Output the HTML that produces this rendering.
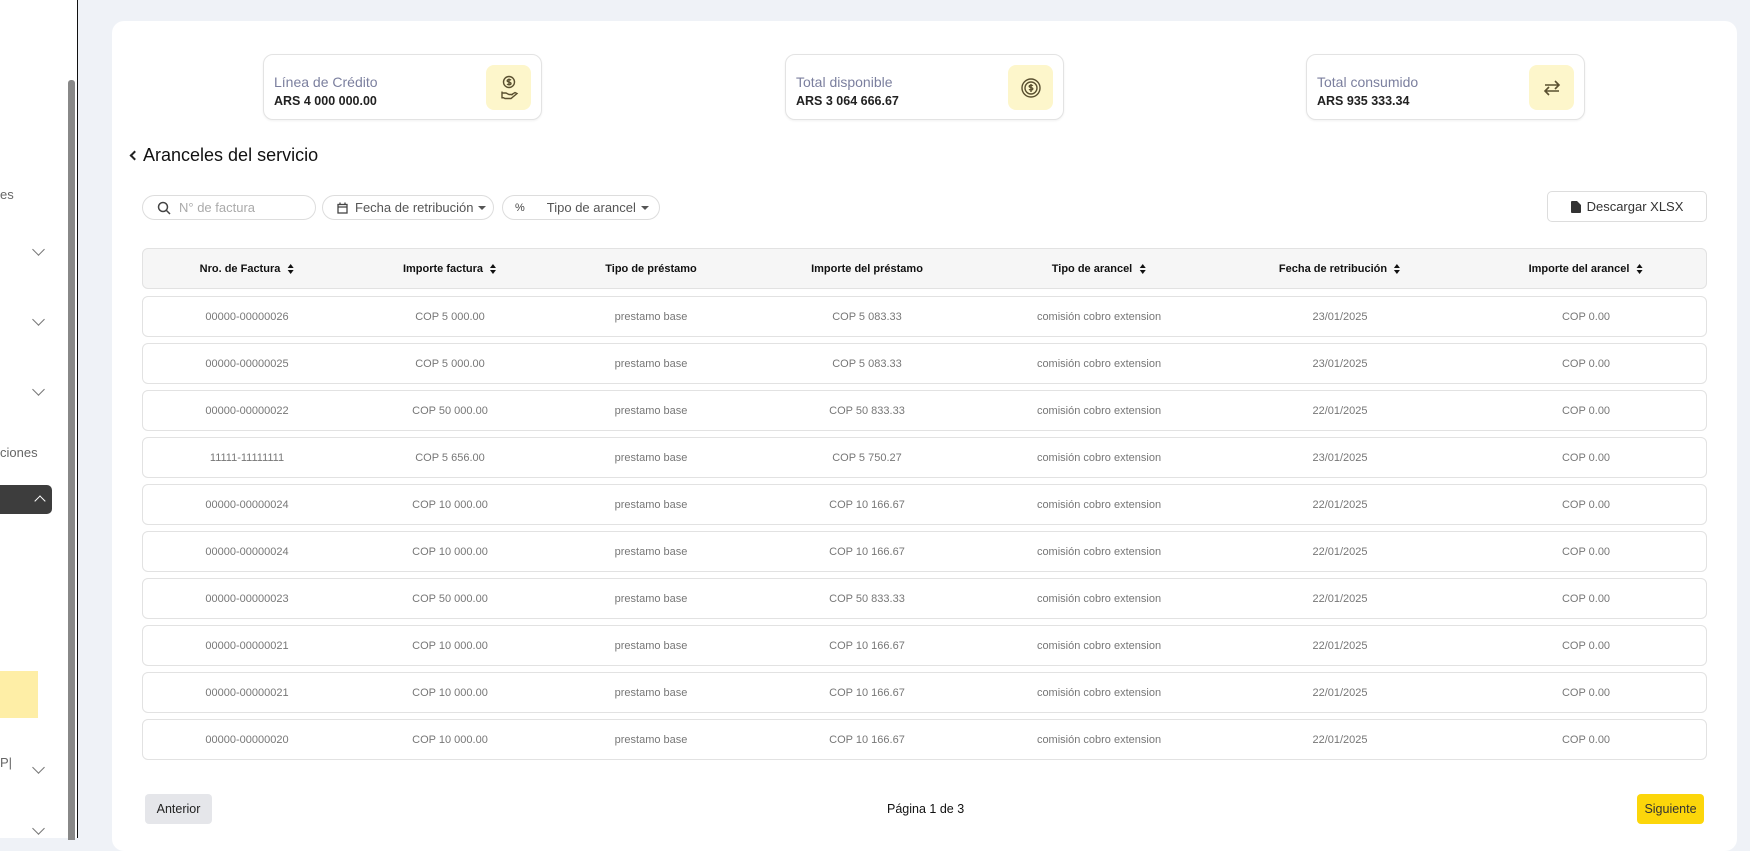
<!DOCTYPE html>
<html><head><meta charset="utf-8"><style>
*{box-sizing:border-box;margin:0;padding:0}
body{width:1750px;height:838px;overflow:hidden;background:#eff2f7;font-family:"Liberation Sans",sans-serif;position:relative}
.abs{position:absolute}
#side{left:0;top:0;width:78px;height:838px;background:#fff;border-right:1px solid #111}
.chev{position:absolute;left:34px;width:9px;height:9px;border-right:1.5px solid #777;border-bottom:1.5px solid #777;transform:rotate(45deg)}
#card{left:112px;top:21px;width:1625px;height:830px;background:#fff;border-radius:12px}
.stat{position:absolute;top:54px;width:279px;height:66px;border:1px solid #e3e3e3;border-radius:10px;background:#fff;box-shadow:0 1px 2px rgba(0,0,0,.06)}
.stat .t{position:absolute;left:10px;top:19px;font-size:14px;color:#7b7f9e}
.stat .v{position:absolute;left:10px;top:39px;font-size:12.5px;font-weight:bold;color:#222}
.stat .ic{position:absolute;right:10px;top:10px;width:45px;height:45px;background:#fdf6cb;border-radius:8px;display:flex;align-items:center;justify-content:center}
.pill{position:absolute;top:195px;height:25px;border:1px solid #ddd;border-radius:13px;font-size:13px;color:#555;display:flex;align-items:center}
.caret{width:0;height:0;border-left:4px solid transparent;border-right:4px solid transparent;border-top:4px solid #555;position:absolute}
.hdr{position:absolute;left:142px;top:248px;width:1565px;height:41px;background:#f6f6f6;border:1px solid #e2e2e2;border-radius:6px}
.row{position:absolute;left:142px;width:1565px;height:41px;border:1px solid #e2e2e2;border-radius:6px;background:#fff}
.c{position:absolute;top:0;height:100%;display:flex;align-items:center;justify-content:center;transform:translateX(-50%);white-space:nowrap;font-size:11px;color:#777}
.hdr .c{font-weight:bold;color:#111;font-size:11px}
.sort{display:inline-block;margin-left:7px;width:7px;height:10px;position:relative}
.sort:before{content:"";position:absolute;top:0;left:0;border-left:3.5px solid transparent;border-right:3.5px solid transparent;border-bottom:4px solid #111}
.sort:after{content:"";position:absolute;bottom:0;left:0;border-left:3.5px solid transparent;border-right:3.5px solid transparent;border-top:4px solid #111}
</style></head><body>
<div id="side" class="abs">
 <div class="abs" style="left:0;top:187px;font-size:13px;color:#666">es</div>
 <div class="chev" style="top:245px"></div>
 <div class="chev" style="top:315px"></div>
 <div class="chev" style="top:385px"></div>
 <div class="abs" style="left:0;top:445px;font-size:13px;color:#666">ciones</div>
 <div class="abs" style="left:0;top:485px;width:52px;height:29px;background:#3d3d3d;border-radius:0 5px 5px 0"></div>
 <div class="abs" style="left:36px;top:497px;width:8px;height:8px;border-left:1.6px solid #fff;border-top:1.6px solid #fff;transform:rotate(45deg)"></div>
 <div class="abs" style="left:0;top:671px;width:38px;height:47px;background:#feeea6"></div>
 <div class="abs" style="left:0;top:755px;font-size:13px;color:#666">P|</div>
 <div class="chev" style="top:763px"></div>
 <div class="chev" style="top:824px"></div>
 <div class="abs" style="left:68px;top:80px;width:7px;height:760px;background:#888;border-radius:3px 3px 0 0"></div>
</div>
<div id="card" class="abs"></div>

<div class="stat" style="left:263px"><div class="t">Línea de Crédito</div><div class="v">ARS 4 000 000.00</div>
<div class="ic"><svg width="22" height="26" viewBox="0 0 22 26" fill="none" stroke="#5a5030" stroke-width="1.4"><circle cx="11" cy="7" r="5.5"/><path d="M11 3.5v7M13 5.2c-.5-.8-3.8-1-3.8.7 0 1.6 3.8.8 3.8 2.6 0 1.6-3.3 1.4-3.9.5"/><path d="M4 18h4l3 1.5h4M4 22l3 1.5h6l6-5-2-1-4 2.5M4 16.5v7"/></svg></div></div>
<div class="stat" style="left:785px"><div class="t">Total disponible</div><div class="v">ARS 3 064 666.67</div>
<div class="ic"><svg width="24" height="24" viewBox="0 0 24 24" fill="none" stroke="#5a5030" stroke-width="1.4"><circle cx="12" cy="12" r="9"/><circle cx="12" cy="12" r="6"/><path d="M12 8v8M13.8 9.8c-.4-.7-3.6-.9-3.6.6s3.6.8 3.6 2.4-3.2 1.3-3.7.5"/></svg></div></div>
<div class="stat" style="left:1306px"><div class="t">Total consumido</div><div class="v">ARS 935 333.34</div>
<div class="ic"><svg width="24" height="24" viewBox="0 0 24 24" fill="none" stroke="#5a5030" stroke-width="1.6"><path d="M5 9h14M15 5l4 4-4 4M19 15H5M9 11l-4 4 4 4"/></svg></div></div>

<div class="abs" style="left:131px;top:152px;width:7px;height:7px;border-left:2px solid #222;border-bottom:2px solid #222;transform:rotate(45deg)"></div>
<div class="abs" style="left:143px;top:145px;font-size:18px;color:#111">Aranceles del servicio</div>

<div class="pill" style="left:142px;width:174px"><svg style="margin-left:14px" width="14" height="14" viewBox="0 0 14 14" fill="none" stroke="#444" stroke-width="1.5"><circle cx="6" cy="6" r="4.5"/><path d="M9.5 9.5L13 13"/></svg><span style="margin-left:8px;color:#aaa">N° de factura</span></div>
<div class="pill" style="left:322px;width:172px"><svg style="margin-left:14px" width="11" height="12" viewBox="0 0 11 12" fill="none" stroke="#444" stroke-width="1.3"><rect x="1" y="2.5" width="9" height="8.5"/><path d="M1 5h9M3 0.5v2M8 0.5v2"/></svg><span style="margin-left:7px">Fecha de retribución</span><span class="caret" style="left:155px;top:10px"></span></div>
<div class="pill" style="left:502px;width:158px"><span style="margin-left:12px;font-size:11px;color:#444">%</span><span style="margin-left:22px">Tipo de arancel</span><span class="caret" style="left:138px;top:10px"></span></div>
<div class="pill" style="left:1547px;top:191px;width:160px;height:31px;border-radius:5px;color:#333;justify-content:center"><svg width="10" height="12" viewBox="0 0 10 12"><path d="M0 1a1 1 0 011-1h5l4 4v7a1 1 0 01-1 1H1a1 1 0 01-1-1z" fill="#333"/></svg><span style="margin-left:6px">Descargar XLSX</span></div>

<div class="hdr">
<div class="c" style="left:104px">Nro. de Factura<span class="sort"></span></div>
<div class="c" style="left:307px">Importe factura<span class="sort"></span></div>
<div class="c" style="left:508px">Tipo de préstamo</div>
<div class="c" style="left:724px">Importe del préstamo</div>
<div class="c" style="left:956px">Tipo de arancel<span class="sort"></span></div>
<div class="c" style="left:1197px">Fecha de retribución<span class="sort"></span></div>
<div class="c" style="left:1443px">Importe del arancel<span class="sort"></span></div>
</div>

<div id="rows"></div>
<script>
var d=[["00000-00000026","COP 5 000.00","COP 5 083.33","23/01/2025"],["00000-00000025","COP 5 000.00","COP 5 083.33","23/01/2025"],["00000-00000022","COP 50 000.00","COP 50 833.33","22/01/2025"],["11111-11111111","COP 5 656.00","COP 5 750.27","23/01/2025"],["00000-00000024","COP 10 000.00","COP 10 166.67","22/01/2025"],["00000-00000024","COP 10 000.00","COP 10 166.67","22/01/2025"],["00000-00000023","COP 50 000.00","COP 50 833.33","22/01/2025"],["00000-00000021","COP 10 000.00","COP 10 166.67","22/01/2025"],["00000-00000021","COP 10 000.00","COP 10 166.67","22/01/2025"],["00000-00000020","COP 10 000.00","COP 10 166.67","22/01/2025"]];
var h="";d.forEach(function(r,i){h+='<div class="row" style="top:'+(296+i*47)+'px"><div class="c" style="left:104px">'+r[0]+'</div><div class="c" style="left:307px">'+r[1]+'</div><div class="c" style="left:508px">prestamo base</div><div class="c" style="left:724px">'+r[2]+'</div><div class="c" style="left:956px">comisión cobro extension</div><div class="c" style="left:1197px">'+r[3]+'</div><div class="c" style="left:1443px">COP 0.00</div></div>'});
document.getElementById("rows").innerHTML=h;
</script>

<div class="abs" style="left:145px;top:794px;width:67px;height:30px;background:#e5e6ea;border-radius:4px;font-size:12.5px;color:#222;display:flex;align-items:center;justify-content:center">Anterior</div>
<div class="abs" style="left:887px;top:802px;font-size:12.5px;color:#111">Página 1 de 3</div>
<div class="abs" style="left:1637px;top:794px;width:67px;height:30px;background:#fcd60a;border-radius:4px;font-size:12.5px;color:#333;display:flex;align-items:center;justify-content:center">Siguiente</div>
</body></html>
